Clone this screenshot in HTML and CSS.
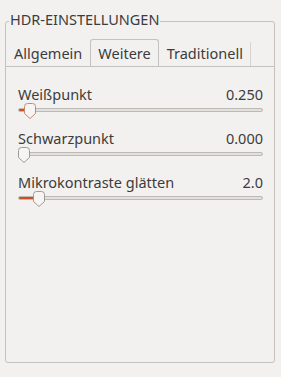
FILE: index.html
```html
<!DOCTYPE html>
<html lang="de">
  <head>
    <meta charset="UTF-8" />
    <title>HDR-Einstellungen</title>
    <link rel="stylesheet" href="styles.css">
  </head>
  <body>
    <!-- Rahmen -->
    <div class="frame">
      <span class="frame-title">HDR-EINSTELLUNGEN</span>

      <!-- Reiter -->
      <div class="tabs">
        <div class="tab">Allgemein</div>
        <div class="tab active">Weitere</div>
        <div class="tab last">Traditionell</div>
      </div>

      <!-- Regler -->
      <div class="page">
        <div class="row">
          <div class="row-head">
            <span>Weißpunkt</span>
            <span>0.250</span>
          </div>
          <div class="scale">
            <div class="trough"><div class="fill" style="width: 9px"></div></div>
            <svg class="knob focus" style="left: 6px" width="12" height="16" viewBox="0 0 12 16">
              <path d="M0.5 3.5 Q0.5 0.5 3.5 0.5 H8.5 Q11.5 0.5 11.5 3.5 V10.5 L6 15.5 L0.5 10.5 Z" />
            </svg>
          </div>
        </div>

        <div class="row">
          <div class="row-head">
            <span>Schwarzpunkt</span>
            <span>0.000</span>
          </div>
          <div class="scale">
            <div class="trough"><div class="fill" style="width: 0px"></div></div>
            <svg class="knob" style="left: 0px" width="12" height="16" viewBox="0 0 12 16">
              <path d="M0.5 3.5 Q0.5 0.5 3.5 0.5 H8.5 Q11.5 0.5 11.5 3.5 V10.5 L6 15.5 L0.5 10.5 Z" />
            </svg>
          </div>
        </div>

        <div class="row">
          <div class="row-head">
            <span>Mikrokontraste glätten</span>
            <span>2.0</span>
          </div>
          <div class="scale">
            <div class="trough"><div class="fill" style="width: 19px"></div></div>
            <svg class="knob" style="left: 15px" width="12" height="16" viewBox="0 0 12 16">
              <path d="M0.5 3.5 Q0.5 0.5 3.5 0.5 H8.5 Q11.5 0.5 11.5 3.5 V10.5 L6 15.5 L0.5 10.5 Z" />
            </svg>
          </div>
        </div>
      </div>
    </div>
  </body>
</html>
```

FILE: styles.css
```css
* {
  margin: 0;
  padding: 0;
  box-sizing: border-box;
  font-family: "Noto Sans", sans-serif;
}

body {
  background: #f2f1f0;
  color: #3c3c3c;
  font-size: 14.5px;
  padding: 21px 6px 14px 5px;
  width: 281px;
  height: 377px;
}

.frame {
  position: relative;
  border: 1px solid #c4c2be;
  border-radius: 3px;
  height: 342px;
}

/* Titel über der Rahmenlinie */
.frame-title {
  position: absolute;
  left: 3px;
  top: -12px;
  padding: 0 1px;
  line-height: 18px;
  background: #f2f1f0;
}

.tabs {
  display: flex;
  height: 45px;
  padding-top: 17px;
  border-bottom: 1px solid #c4c2be;
}

.tab {
  height: 27px;
  padding: 4px 7px 0 7px;
  line-height: 18px;
  border: 1px solid transparent;
  border-bottom: none;
}

.tab.active {
  border-color: #c4c2be;
  border-radius: 3px 3px 0 0;
}

.tab.last {
  border-right: none;
  box-shadow: 1px 0 0 #d6d4d0;
  margin-top: 3px;
  padding-top: 1px;
  height: 24px;
}

.page {
  padding: 18px 11px 0 12px;
}

.row {
  height: 44px;
}

.row-head {
  display: flex;
  justify-content: space-between;
  line-height: 18px;
}

.scale {
  position: relative;
  height: 20px;
  padding-top: 5px;
}

.trough {
  height: 4px;
  border: 1px solid #bdbab5;
  border-radius: 2px;
  background: #e2e0dc;
  overflow: hidden;
}

.fill {
  height: 100%;
  background: #cf4e24;
}

/* Schieberegler-Knopf */
.knob {
  position: absolute;
  top: 0;
}

.knob path {
  fill: #f6f5f4;
  stroke: #9e9b96;
  stroke-width: 1;
}

.knob.focus path {
  stroke: #c9886a;
}
```
